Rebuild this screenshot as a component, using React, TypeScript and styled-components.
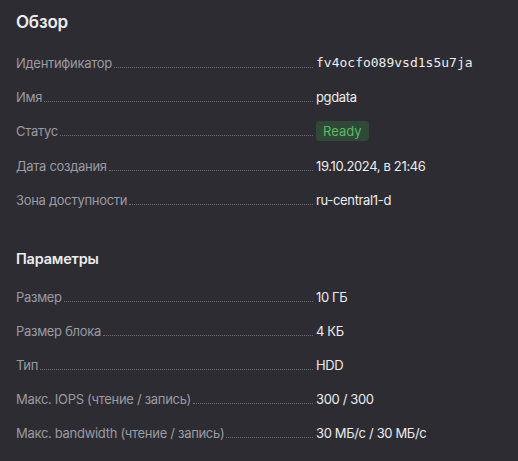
import React from "react";
import styled, { createGlobalStyle } from "styled-components";

const Global = createGlobalStyle`
  html, body { margin: 0; padding: 0; background: #2d2c33; }
  body { font-family: Inter, "Noto Sans", sans-serif; -webkit-font-smoothing: antialiased; }
`;

const Page = styled.div`
  padding: 10px 16px 0 16px;
  background: #2d2c33;
  min-height: 461px;
  box-sizing: border-box;
`;

const Section = styled.section<{ $gapTop?: number }>`
  display: flex;
  flex-direction: column;
  margin-top: ${(p) => p.$gapTop ?? 0}px;
`;

const Heading = styled.h2<{ $size: number; $mb: number }>`
  margin: 0 0 ${(p) => p.$mb}px 0;
  font-size: ${(p) => p.$size}px;
  line-height: 24px;
  font-weight: 600;
  color: #ececef;
  letter-spacing: -0.2px;
`;

const Rows = styled.div<{ $gap: number }>`
  display: flex;
  flex-direction: column;
  gap: ${(p) => p.$gap}px;
`;

const Row = styled.div`
  display: grid;
  grid-template-columns: 297px 1fr;
  column-gap: 3px;
  height: 20px;
  align-items: center;
`;

const LabelCell = styled.div`
  display: flex;
  align-items: flex-end;
  height: 20px;
  line-height: 20px;
`;

const Label = styled.span`
  font-size: 13px;
  color: #9b9ba1;
  white-space: nowrap;
  letter-spacing: -0.3px;
`;

const Leader = styled.span`
  flex: 1;
  border-bottom: 1px dotted #6d6d73;
  margin: 0 0 5px 2px;
`;

const Value = styled.span<{ $mono?: boolean }>`
  font-size: 13px;
  line-height: 20px;
  color: #ececee;
  font-family: ${(p) => (p.$mono ? `"DejaVu Sans Mono", monospace` : `inherit`)};
  letter-spacing: ${(p) => (p.$mono ? "0" : "-0.35px")};
  white-space: nowrap;
`;

const Badge = styled.span`
  justify-self: start;
  display: inline-flex;
  align-items: center;
  height: 20px;
  padding: 0 7px;
  border-radius: 4px;
  background: #2f4936;
  color: #5cb867;
  font-size: 13px;
`;

type Item = { label: string; value: string; mono?: boolean; badge?: boolean };

const overview: Item[] = [
  { label: "Идентификатор", value: "fv4ocfo089vsd1s5u7ja", mono: true },
  { label: "Имя", value: "pgdata" },
  { label: "Статус", value: "Ready", badge: true },
  { label: "Дата создания", value: "19.10.2024, в 21:46" },
  { label: "Зона доступности", value: "ru-central1-d" },
];

const params: Item[] = [
  { label: "Размер", value: "10 ГБ" },
  { label: "Размер блока", value: "4 КБ" },
  { label: "Тип", value: "HDD" },
  { label: "Макс. IOPS (чтение / запись)", value: "300 / 300" },
  { label: "Макс. bandwidth (чтение / запись)", value: "30 МБ/с / 30 МБ/с" },
];

const List = ({ items, gap }: { items: Item[]; gap: number }) => (
  <Rows $gap={gap}>
    {items.map((it) => (
      <Row key={it.label}>
        <LabelCell>
          <Label>{it.label}</Label>
          <Leader />
        </LabelCell>
        {it.badge ? <Badge>{it.value}</Badge> : <Value $mono={it.mono}>{it.value}</Value>}
      </Row>
    ))}
  </Rows>
);

export default function App() {
  return (
    <>
      <Global />
      <Page>
        <Section>
          <Heading $size={17} $mb={19}>Обзор</Heading>
          <List items={overview} gap={14.2} />
        </Section>
        <Section $gapTop={37}>
          <Heading $size={14.5} $mb={16}>Параметры</Heading>
          <List items={params} gap={14} />
        </Section>
      </Page>
    </>
  );
}
